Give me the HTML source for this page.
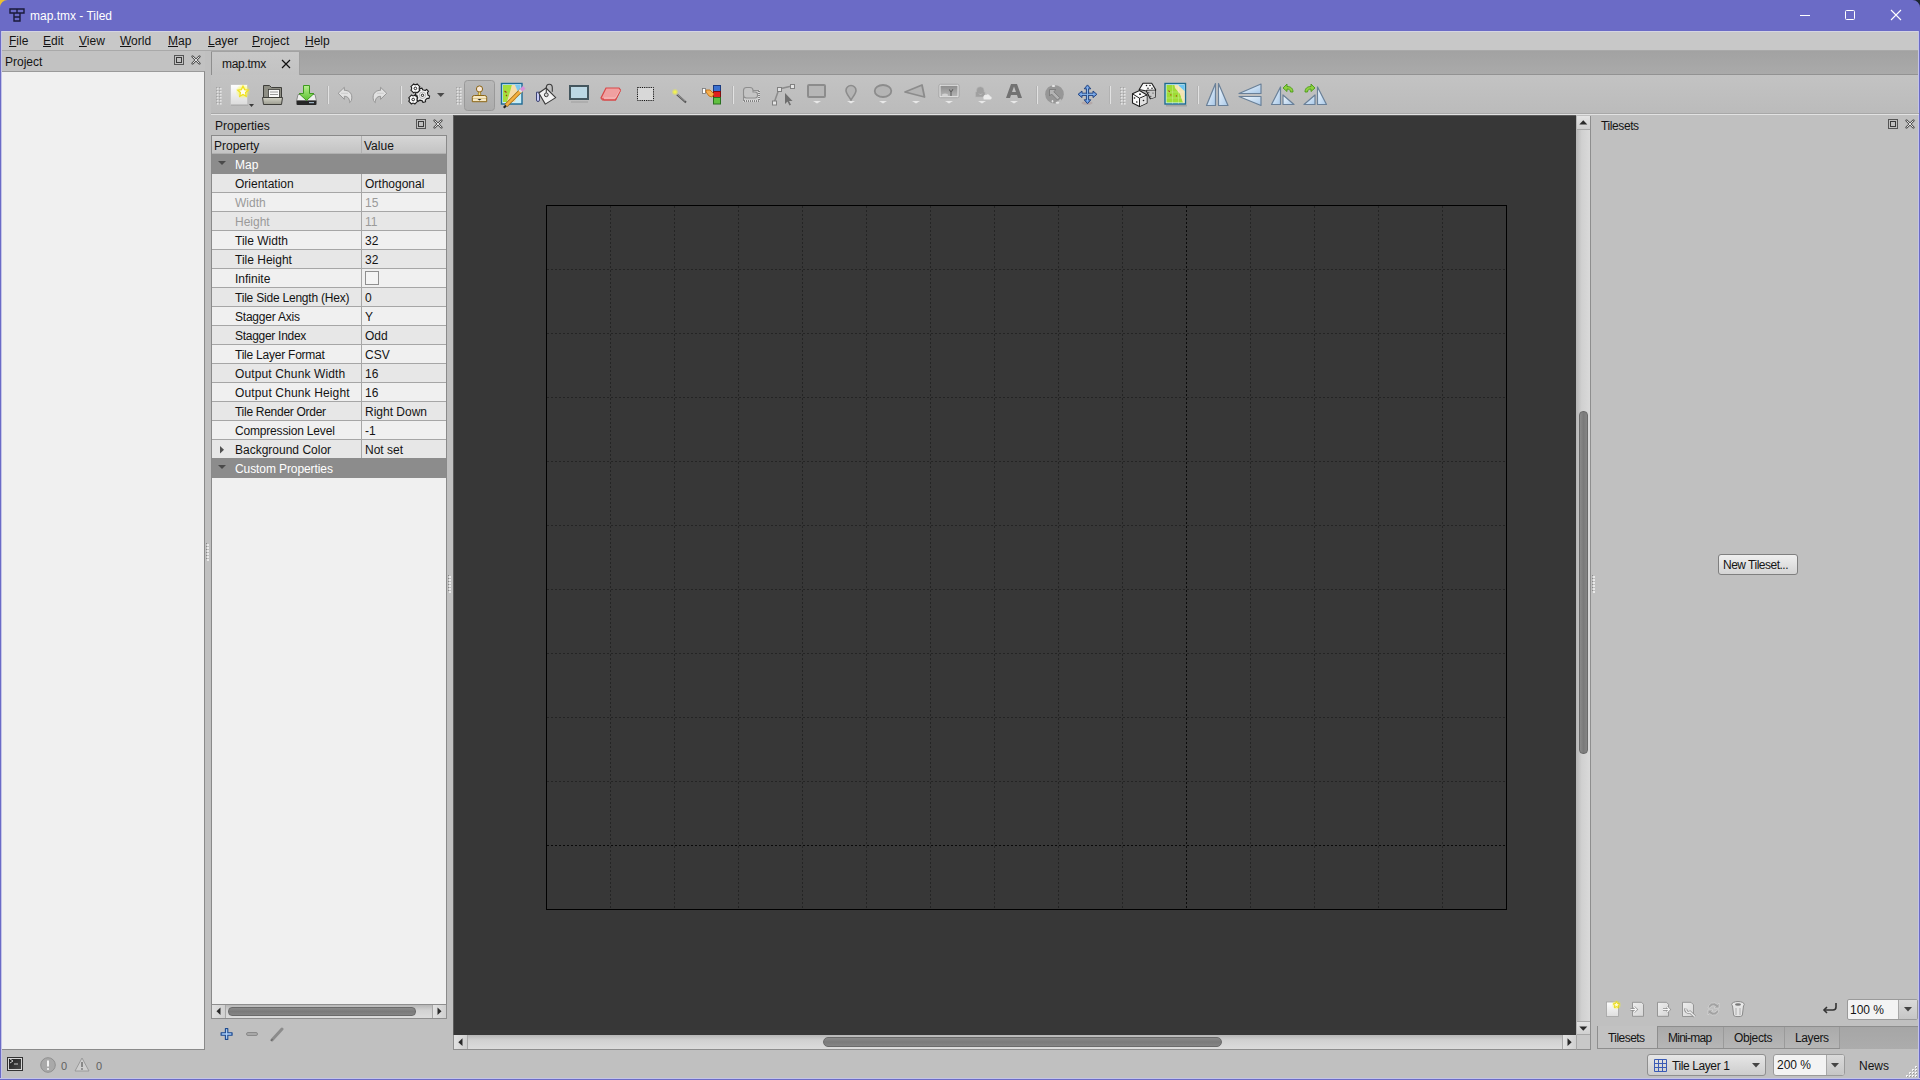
<!DOCTYPE html>
<html><head><meta charset="utf-8">
<style>
*{margin:0;padding:0;box-sizing:border-box}
html,body{width:1920px;height:1080px;overflow:hidden;background:#c0c0c0;font-family:"Liberation Sans",sans-serif;font-size:12px;color:#141414}
.a{position:absolute}
.t{position:absolute;line-height:14px;white-space:nowrap}
#title{left:0;top:0;width:1920px;height:31px;background:#6b6bc6}
#menubar{left:2px;top:31px;width:1916px;height:20px;background:#c8c8c8;border-bottom:1px solid #a9a9a9;border-top:1px solid #d4d4e2}
u{text-decoration:underline;text-underline-offset:1px;text-decoration-thickness:1px}
.dockhdr{background:#c2c2c2}
.fl{position:absolute;width:10px;height:10px;border:1px solid #555}
.fl:after{content:"";position:absolute;box-sizing:border-box;left:1px;top:1px;width:6px;height:6px;border:1px solid #3a3a3a}
.cl{position:absolute;width:11px;height:11px}
#canvas{left:453px;top:115px;width:1123px;height:920px;background:#373737;border-left:1px solid #5c5c5c;border-top:1px solid #5c5c5c}
#map{left:546px;top:205px;width:961px;height:705px;border:1px solid #000}
.vl{position:absolute;width:1px;background:repeating-linear-gradient(to bottom,#242424 0 2px,transparent 2px 4px)}
.hl{position:absolute;height:1px;background:repeating-linear-gradient(to right,#242424 0 2px,transparent 2px 4px)}
.row{position:absolute;left:212px;width:234px;height:19px;border-bottom:1px solid #a6a6a6}
.row .c1{position:absolute;left:0;top:0;width:150px;height:18px;border-right:1px solid #a6a6a6}
.row .k{position:absolute;left:23px;top:3px;line-height:14px;white-space:nowrap}
.row .v{position:absolute;left:153px;top:3px;line-height:14px;white-space:nowrap}
.alt{background:#e7e7e7}
.base{background:#f0f0f0}
.grp{background:#8c8c8c;color:#fff;border-bottom:none}
.grp .k{top:4px}
.dis{color:#9a9a9a}
</style></head><body>
<!-- window frame -->
<div class="a" id="title">
  <svg class="a" style="left:9px;top:8px" width="16" height="14" viewBox="0 0 16 14"><path d="M1 1h14v4H1zM5 5h6M5 5v8h6V5M8 1v4M5 9h6" fill="none" stroke="#1a1a3a" stroke-width="1.4"/></svg>
  <div class="t" style="left:30px;top:9px;color:#fff">map.tmx - Tiled</div>
  <div class="a" style="left:1800px;top:15px;width:10px;height:1px;background:#fff"></div>
  <div class="a" style="left:1845px;top:10px;width:10px;height:10px;border:1px solid #fff;border-radius:1.5px"></div>
  <svg class="a" style="left:1890px;top:9px" width="12" height="12" viewBox="0 0 12 12"><path d="M1 1L11 11M11 1L1 11" stroke="#fff" stroke-width="1.1"/></svg>
</div>
<svg class="a" style="left:0;top:0" width="8" height="8" viewBox="0 0 8 8"><path d="M0 0h7.5A7.5 7.5 0 0 0 0 7.5z" fill="#ecc030"/></svg>
<svg class="a" style="left:1912px;top:0" width="8" height="8" viewBox="0 0 8 8"><path d="M8 0H0.5A7.5 7.5 0 0 1 8 7.5z" fill="#1c2630"/></svg>
<div class="a" style="left:0;top:31px;width:1px;height:1049px;background:#6b6bc6"></div>
<div class="a" style="left:1px;top:31px;width:1px;height:1047px;background:#c4c4e8"></div>
<div class="a" style="left:1919px;top:31px;width:1px;height:1049px;background:#6b6bc6"></div>
<div class="a" style="left:1918px;top:31px;width:1px;height:1047px;background:#c4c4e8"></div>
<svg class="a" style="left:1905px;top:1065px" width="13" height="13" viewBox="0 0 13 13"><g fill="#f4f4f4"><rect x="10" y="1" width="2" height="2"/><rect x="7" y="4" width="2" height="2"/><rect x="10" y="4" width="2" height="2"/><rect x="4" y="7" width="2" height="2"/><rect x="7" y="7" width="2" height="2"/><rect x="10" y="7" width="2" height="2"/><rect x="1" y="10" width="2" height="2"/><rect x="4" y="10" width="2" height="2"/><rect x="7" y="10" width="2" height="2"/><rect x="10" y="10" width="2" height="2"/></g><g fill="#9a9a9a"><rect x="11" y="2" width="1" height="1"/><rect x="8" y="5" width="1" height="1"/><rect x="11" y="5" width="1" height="1"/><rect x="5" y="8" width="1" height="1"/><rect x="8" y="8" width="1" height="1"/><rect x="11" y="8" width="1" height="1"/><rect x="2" y="11" width="1" height="1"/><rect x="5" y="11" width="1" height="1"/><rect x="8" y="11" width="1" height="1"/><rect x="11" y="11" width="1" height="1"/></g></svg>
<div class="a" style="left:0;top:1078px;width:1920px;height:1px;background:#c4c4e8"></div><div class="a" style="left:0;top:1079px;width:1920px;height:1px;background:#6b6bc6"></div>

<div class="a" id="menubar">
  <div class="t" style="left:7px;top:2px"><u>F</u>ile</div>
  <div class="t" style="left:41px;top:2px"><u>E</u>dit</div>
  <div class="t" style="left:77px;top:2px"><u>V</u>iew</div>
  <div class="t" style="left:118px;top:2px"><u>W</u>orld</div>
  <div class="t" style="left:166px;top:2px"><u>M</u>ap</div>
  <div class="t" style="left:206px;top:2px"><u>L</u>ayer</div>
  <div class="t" style="left:250px;top:2px"><u>P</u>roject</div>
  <div class="t" style="left:303px;top:2px"><u>H</u>elp</div>
</div>

<!-- Project dock -->
<div class="a dockhdr" style="left:2px;top:51px;width:203px;height:21px"></div>
<div class="t" style="left:5px;top:55px">Project</div>
<div class="fl" style="left:174px;top:55px"></div>
<svg class="a" style="left:190px;top:54px" width="12" height="12" viewBox="0 0 12 12"><path d="M2.5 2.5L9.5 9.5M9.5 2.5L2.5 9.5" stroke="#4e4e4e" stroke-width="2.4" stroke-linecap="round"/><path d="M2.6 2.6L9.4 9.4M9.4 2.6L2.6 9.4" stroke="#f4f4f4" stroke-width="0.9"/></svg>
<div class="a" style="left:2px;top:71px;width:203px;height:979px;background:#f0f0f0;border-top:1px solid #9a9a9a;border-right:1px solid #8a8a8a;border-bottom:1px solid #8a8a8a"></div>

<!-- tab bar -->
<div class="a" style="left:205px;top:51px;width:1713px;height:24px;background:linear-gradient(#a2a2a2,#aaaaaa);border-bottom:1px solid #929292"></div>
<div class="a" style="left:205px;top:51px;width:6px;height:24px;background:#c0c0c0"></div>
<div class="a" style="left:211px;top:52px;width:89px;height:23px;background:linear-gradient(#c8c8c8,#c2c2c2);border-left:1px solid #8e8e8e;border-right:1px solid #a0a0a0"></div>
<div class="t" style="left:222px;top:57px;letter-spacing:-0.3px">map.tmx</div>
<svg class="a" style="left:281px;top:59px" width="10" height="10" viewBox="0 0 10 10"><path d="M1 1L9 9M9 1L1 9" stroke="#111" stroke-width="1.2"/></svg>

<!-- toolbar area -->
<div class="a" style="left:211px;top:75px;width:1707px;height:38px;background:linear-gradient(#c3c3c3,#bbbbbb)"></div>

<!--TOOLBAR--><svg class="a" style="left:211px;top:74px" width="1708" height="41" viewBox="211 74 1708 41">
<defs>
 <linearGradient id="gpage" x1="0" y1="0" x2="0" y2="1"><stop offset="0" stop-color="#ffffff"/><stop offset="1" stop-color="#dcdcdc"/></linearGradient>
 <radialGradient id="gglow"><stop offset="0" stop-color="#ffff40" stop-opacity="1"/><stop offset="1" stop-color="#ffff00" stop-opacity="0"/></radialGradient>
 <linearGradient id="gfold" x1="0" y1="0" x2="0" y2="1"><stop offset="0" stop-color="#d2d2c6"/><stop offset="1" stop-color="#9c9c90"/></linearGradient>
 <linearGradient id="ggreen" x1="0" y1="0" x2="0" y2="1"><stop offset="0" stop-color="#b8f090"/><stop offset="1" stop-color="#5cc030"/></linearGradient>
 <linearGradient id="gtri" x1="0" y1="0" x2="1" y2="1"><stop offset="0" stop-color="#f4faff"/><stop offset="1" stop-color="#a8c8e8"/></linearGradient>
 <linearGradient id="gsel" x1="0" y1="0" x2="0" y2="1"><stop offset="0" stop-color="#b8b8b8"/><stop offset="1" stop-color="#acacac"/></linearGradient>
 <g id="handle"><rect x="1" y="1" width="1.6" height="1.6" fill="#e6e6e6"/><rect x="0" y="0" width="1.2" height="1.2" fill="#a4a4a4"/><rect x="4" y="1" width="1.6" height="1.6" fill="#e6e6e6"/><rect x="3" y="0" width="1.2" height="1.2" fill="#a4a4a4"/><rect x="1" y="4" width="1.6" height="1.6" fill="#e6e6e6"/><rect x="0" y="3" width="1.2" height="1.2" fill="#a4a4a4"/><rect x="4" y="4" width="1.6" height="1.6" fill="#e6e6e6"/><rect x="3" y="3" width="1.2" height="1.2" fill="#a4a4a4"/><rect x="1" y="7" width="1.6" height="1.6" fill="#e6e6e6"/><rect x="0" y="6" width="1.2" height="1.2" fill="#a4a4a4"/><rect x="4" y="7" width="1.6" height="1.6" fill="#e6e6e6"/><rect x="3" y="6" width="1.2" height="1.2" fill="#a4a4a4"/><rect x="1" y="10" width="1.6" height="1.6" fill="#e6e6e6"/><rect x="0" y="9" width="1.2" height="1.2" fill="#a4a4a4"/><rect x="4" y="10" width="1.6" height="1.6" fill="#e6e6e6"/><rect x="3" y="9" width="1.2" height="1.2" fill="#a4a4a4"/><rect x="1" y="13" width="1.6" height="1.6" fill="#e6e6e6"/><rect x="0" y="12" width="1.2" height="1.2" fill="#a4a4a4"/><rect x="4" y="13" width="1.6" height="1.6" fill="#e6e6e6"/><rect x="3" y="12" width="1.2" height="1.2" fill="#a4a4a4"/><rect x="1" y="16" width="1.6" height="1.6" fill="#e6e6e6"/><rect x="0" y="15" width="1.2" height="1.2" fill="#a4a4a4"/><rect x="4" y="16" width="1.6" height="1.6" fill="#e6e6e6"/><rect x="3" y="15" width="1.2" height="1.2" fill="#a4a4a4"/></g>
 <g id="sep"><rect x="0" y="0" width="1" height="18" fill="#b2b2b2"/><rect x="1" y="0" width="1" height="18" fill="#e2e2e2"/></g>
 <path id="dtri" d="M0 0h8l-4 3z"/>
</defs>
<!-- bottom lines -->
<rect x="211" y="113" width="1708" height="1" fill="#a8a8a8"/>
<rect x="211" y="114" width="1708" height="1" fill="#e2e2e2"/>
<!-- handle 1 -->
<use href="#handle" x="216" y="87"/>
<!-- new -->
<rect x="231" y="104" width="17" height="1.5" fill="#8c8c8c" opacity=".6"/>
<rect x="230.5" y="84.5" width="17" height="20" fill="url(#gpage)" stroke="#c4c4c4" stroke-width=".8"/>
<circle cx="243" cy="91.5" r="7.5" fill="url(#gglow)"/>
<path d="M243 86.3l1.6 3.3 3.6.5-2.6 2.5.6 3.6-3.2-1.7-3.2 1.7.6-3.6-2.6-2.5 3.6-.5z" fill="#fffef0" stroke="#f0e020" stroke-width="1.3"/>
<path d="M249 104h5l-2.5 3z" fill="#3a3a3a"/>
<!-- open -->
<path d="M263.5 85.5h6l2 2h10v10h-18z" fill="#8e8e84" stroke="#3e3e3a"/>
<rect x="268.5" y="89.5" width="11" height="8" fill="#fbfbfb" stroke="#3e3e3a" stroke-width=".8"/>
<path d="M270 92h8M270 94.5h8" stroke="#9a9a9a"/>
<path d="M262.5 97.5h20l-1 7h-18z" fill="url(#gfold)" stroke="#3e3e3a"/>
<!-- save -->
<path d="M298 94.5h17l1.5 6.5h-20z" fill="#eeeeee" stroke="#8a8a8a"/>
<rect x="296.5" y="100.5" width="20" height="4.5" rx="1" fill="#262626"/>
<rect x="309" y="102" width="5" height="1.2" fill="#9ab0c0"/>
<path d="M303.5 85.5h6v8h4.5l-7.5 7-7.5-7h4.5z" fill="url(#ggreen)" stroke="#3f9a20"/>
<!-- sep -->
<use href="#sep" x="327" y="86"/>
<!-- undo -->
<path id="undoP" d="M338.2 93.3L344.3 87.3V90.3C348.5 90.3 351.8 92.8 351.8 97.2C351.8 99.6 351.2 101.6 349.6 102.6C349.6 99 348.3 96.3 344.3 96.3V99.3Z" fill="#e2e2e2" stroke="#8e8e8e" stroke-width=".9" stroke-linejoin="round"/>
<path d="M341 93.3h7" stroke="#c8c8c8" stroke-width=".8"/>
<!-- redo -->
<g transform="matrix(-1 0 0 1 724.9 0)"><path d="M338.2 93.3L344.3 87.3V90.3C348.5 90.3 351.8 92.8 351.8 97.2C351.8 99.6 351.2 101.6 349.6 102.6C349.6 99 348.3 96.3 344.3 96.3V99.3Z" fill="#e2e2e2" stroke="#8e8e8e" stroke-width=".9" stroke-linejoin="round"/><path d="M341 93.3h7" stroke="#c8c8c8" stroke-width=".8"/></g>
<use href="#sep" x="400" y="86"/>
<!-- gears -->
<path d="M428.10 95.30 L429.67 95.90 L428.95 98.50 L427.29 98.20 L425.30 100.15 L425.57 101.81 L422.95 102.49 L422.38 100.90 L419.70 100.15 L418.39 101.21 L416.50 99.28 L417.59 98.00 L416.90 95.30 L415.33 94.70 L416.05 92.10 L417.71 92.40 L419.70 90.45 L419.43 88.79 L422.05 88.11 L422.62 89.70 L425.30 90.45 L426.61 89.39 L428.50 91.32 L427.41 92.60Z" fill="#f0f0f0" stroke="#1e1e1e" stroke-width="1.1" stroke-linejoin="round"/>
<circle cx="422.5" cy="95.3" r="3.2" fill="none" stroke="#a8a8a8" stroke-width=".8"/>
<circle cx="422.5" cy="95.3" r="1.2" fill="none" stroke="#222" stroke-width="1"/>
<path d="M419.19 89.31 L419.89 90.10 L417.03 92.92 L416.25 92.21 L414.49 92.19 L413.70 92.89 L410.88 90.03 L411.59 89.25 L411.61 87.49 L410.91 86.70 L413.77 83.88 L414.55 84.59 L416.31 84.61 L417.10 83.91 L419.92 86.77 L419.21 87.55Z" fill="#fafafa" stroke="#1e1e1e" stroke-width="1.1" stroke-linejoin="round"/>
<circle cx="415.4" cy="88.4" r="1.3" fill="none" stroke="#222" stroke-width="1"/>
<path d="M416.99 100.41 L417.69 101.20 L414.83 104.02 L414.05 103.31 L412.29 103.29 L411.50 103.99 L408.68 101.13 L409.39 100.35 L409.41 98.59 L408.71 97.80 L411.57 94.98 L412.35 95.69 L414.11 95.71 L414.90 95.01 L417.72 97.87 L417.01 98.65Z" fill="#fafafa" stroke="#1e1e1e" stroke-width="1.1" stroke-linejoin="round"/>
<circle cx="413.2" cy="99.5" r="1.3" fill="none" stroke="#222" stroke-width="1"/>
<path d="M437 93h7.5l-3.75 4z" fill="#4a4a4a"/>
<!-- handle 2 -->
<use href="#handle" x="456" y="87"/>
<!-- selected stamp button -->
<rect x="464.5" y="80.5" width="30" height="30" rx="3" fill="url(#gsel)" stroke="#999"/>
<circle cx="479.5" cy="89" r="3.1" fill="#f8e8d8" stroke="#8a6414" stroke-width="1"/>
<rect x="478.3" y="92" width="2.4" height="3.5" rx="1" fill="#f4e070" stroke="#8a6414" stroke-width=".7"/>
<path d="M472.3 101.7v-4.2a2 2 0 0 1 2-2h10.4a2 2 0 0 1 2 2v4.2z" fill="#f6e8c4" stroke="#8a6414" stroke-width="1"/>
<path d="M473 98.5h13" stroke="#dcc890" stroke-width="1"/>
<path d="M477.5 99h4l-2 1.5z" fill="#222"/>
<!-- terrain brush -->
<rect x="501.5" y="83.5" width="20.5" height="20.5" fill="#c8eef8" stroke="#1d6a94" stroke-width="1.4"/>
<path d="M503 85h9l-1 6-4 11h-4z" fill="#a4de3c"/>
<path d="M512 85h3l3 7-3 10h-8z" fill="#f6dca8"/>
<path d="M515 85h5.5v8l-2.5-1z" fill="#7cc8f0"/>
<path d="M504.5 91l2 1.5M506 95l1 1" stroke="#a04010" stroke-width="1.1"/>
<path d="M506 105.5l15.5-15.5" stroke="#9a6810" stroke-width="4"/>
<path d="M506 105.5l15.5-15.5" stroke="#f4b040" stroke-width="2.5"/>
<path d="M519.7 91.8l1.8-1.8" stroke="#e0e0e0" stroke-width="3.6"/>
<path d="M521.2 90.3l3-3" stroke="#d890d8" stroke-width="3.6"/>
<path d="M503.8 107.7l2.2-2.2" stroke="#222" stroke-width="2.2"/>
<!-- bucket -->
<path d="M536.5 92.2h4l-1 1.5v6.3a1.5 1.5 0 0 1-3 0z" fill="#c8ccf8" stroke="#3c4270" stroke-width="1"/>
<path d="M538.8 93l7.2-5 9.7 9.6-10.4 6.5z" fill="#f2f2f2" stroke="#3a3a3a" stroke-width="1.1" stroke-linejoin="round"/>
<path d="M546.3 92.8v-5c0-2.2 1.3-3.5 3-3.5s3 1.3 3 3.5v4" fill="none" stroke="#3a3a3a" stroke-width="1.1"/>
<circle cx="546.3" cy="94.8" r="1.9" fill="#d8d8d8" stroke="#3a3a3a" stroke-width="1"/>
<!-- shape fill rect -->
<rect x="570" y="86" width="18" height="13" fill="#bcd8e4" stroke="#44565e" stroke-width="2"/>
<rect x="571" y="101" width="17" height="2" fill="#a4a4a4" opacity=".6"/>
<!-- eraser -->
<path d="M606 88h13l1.5 2-5 10h-13l-1.5-2z" fill="#f0a0a0" stroke="#d84848" stroke-width="1.2"/>
<path d="M602.5 98l1.5 2h11.5l5-10" fill="none" stroke="#d84848" stroke-width="1.2"/>
<path d="M604 98h11.5l4.5-8" fill="none" stroke="#f8c8c8" stroke-width=".8"/>
<!-- rect select -->
<rect x="637.5" y="87.5" width="16" height="13" fill="#d8d8d8" stroke="#111" stroke-dasharray="1.2 1"/>
<!-- magic wand -->
<circle cx="675" cy="92" r="3.5" fill="url(#gglow)"/>
<path d="M677 94.5l9 8" stroke="#555" stroke-width="2"/>
<path d="M677 94l8 7.2" stroke="#bbb" stroke-width=".7"/>
<!-- select same tile -->
<rect x="713.5" y="85.5" width="7" height="6" fill="#3a70d0" stroke="#1a3a80"/>
<rect x="713.5" y="91.5" width="7" height="6" fill="#e02020" stroke="#801010"/>
<rect x="713.5" y="97.5" width="7" height="6.5" fill="#60c040" stroke="#2a7020"/>
<rect x="702.5" y="88.5" width="3" height="5" fill="#fff" stroke="#777" stroke-width=".8"/>
<path d="M706 90h4l4 4-2 3-3-1-3-4z" fill="#f8b050" stroke="#c07010" stroke-width=".9"/>
<use href="#sep" x="732" y="86"/>
<!-- select objects (disabled) -->
<rect x="743.5" y="90.5" width="15.5" height="10.5" fill="#cdcdcd" stroke="#f4f4f4"/>
<rect x="743.5" y="90.5" width="15.5" height="10.5" fill="none" stroke="#2a2a2a" stroke-dasharray="1 1"/>
<path d="M746.5 87.5h3.5a3 3 0 0 1 3 3v1.5h2a2.5 2.5 0 0 1 2.5 2.5v1a2.5 2.5 0 0 1-2.5 2.5h-8.5a3 3 0 0 1-3-3v-4.5a3 3 0 0 1 3-3z" fill="#c4c4c4" stroke="#8e8e8e" stroke-width="1.1"/>
<!-- edit polygons -->
<path d="M774 103l5-14 13-3" fill="none" stroke="#8c8c8c" stroke-width="1.5"/>
<rect x="772.5" y="101" width="4" height="4" fill="#e4e4e4" stroke="#808080"/>
<rect x="777.5" y="87.5" width="4" height="4" fill="#e4e4e4" stroke="#808080"/>
<rect x="790.5" y="84.5" width="4" height="4" fill="#e4e4e4" stroke="#808080"/>
<path d="M785 93v11l2.5-2.5 2 4 1.5-.8-2-3.8h3.5z" fill="#6e6e6e"/>
<!-- rect obj -->
<rect x="808" y="85" width="17" height="12" fill="#b6b6b6" stroke="#8c8c8c" stroke-width="2" rx="1"/>
<path d="M813 101h8l-4 2.5z" fill="#e8e8e8"/>
<!-- point -->
<path d="M851 85.5a5 5 0 0 1 5 5c0 3-3 6-5 9.5-2-3.5-5-6.5-5-9.5a5 5 0 0 1 5-5z" fill="#b4b4b4" stroke="#8c8c8c" stroke-width="1.6"/>
<path d="M847 101h8l-4 2.5z" fill="#e8e8e8"/>
<!-- ellipse -->
<ellipse cx="883" cy="91" rx="8.3" ry="6" fill="#b4b4b4" stroke="#8c8c8c" stroke-width="1.8"/>
<path d="M879 101h8l-4 2.5z" fill="#e8e8e8"/>
<!-- polygon -->
<path d="M905 92l17-7 2.5 12z" fill="#b4b4b4" stroke="#8c8c8c" stroke-width="1.8" stroke-linejoin="round"/>
<path d="M912 101h8l-4 2.5z" fill="#e8e8e8"/>
<!-- image -->
<defs><linearGradient id="gimg" x1="0" y1="0" x2="0" y2="1"><stop offset="0" stop-color="#8e8e8e"/><stop offset="1" stop-color="#b4b4b4"/></linearGradient></defs>
<rect x="939" y="84.3" width="20" height="13.4" rx="1.5" fill="#e6e6e6" stroke="#9a9a9a" stroke-width=".8"/>
<rect x="940.5" y="85.8" width="17" height="10.4" fill="url(#gimg)"/>
<ellipse cx="945" cy="95" rx="3" ry="1.6" fill="#d2d2d2"/>
<path d="M951 96v-4M951 92l-1.8-2.5M951 92l2-2.8" stroke="#5e5e5e" stroke-width="1.1" fill="none"/>
<path d="M945 101h8l-4 2.5z" fill="#e8e8e8"/>
<!-- template -->
<path d="M976.5 90.5a3.8 3.8 0 0 1 7.6 0v1.5h1v5h-9.6v-5h1z" fill="#a0a0a0" stroke="#b8b8b8" stroke-width=".6"/>
<path d="M979 93.5l1.5 1.5 1.5-1.5" stroke="#c4c4c4" stroke-width=".8" fill="none"/>
<path d="M983.5 98.2a2.3 2.3 0 0 1 2.8-3.2 2.2 2.2 0 0 1 3.7 1.2 1.6 1.6 0 0 1 .2 3.2h-6.5z" fill="#ececec"/>
<path d="M978 101h8l-4 2.5z" fill="#e8e8e8"/>
<!-- text A -->
<path d="M1006 98l5-14h6l5 14h-4l-1-3h-6l-1 3zM1012 92h4l-2-5.5z" fill="#727272" fill-rule="evenodd"/>
<path d="M1010 101h8l-4 2.5z" fill="#e8e8e8"/>
<use href="#sep" x="1036" y="86"/>
<!-- world tool -->
<circle cx="1054.5" cy="94.2" r="9.3" fill="#979797"/>
<path d="M1061 99.5a9.3 9.3 0 0 1-5 3.8" stroke="#bdbdbd" stroke-width="2.2" fill="none"/>
<path d="M1049.5 89.5h6.5l-2.2 2.2 6 6-2.3 2.3-6-6-2 2z" fill="#b4b4b4" stroke="#7a7a7a" stroke-width=".9" stroke-linejoin="round"/>
<ellipse cx="1053.5" cy="86" rx="1.8" ry="1" fill="#e6e6e6"/>
<ellipse cx="1052.5" cy="101.2" rx=".8" ry="1.2" fill="#e6e6e6"/>
<ellipse cx="1057.5" cy="102.8" rx="1.8" ry="1" fill="#e6e6e6"/>
<!-- move -->
<ellipse cx="1087" cy="103" rx="5.5" ry="1.8" fill="#a08080" opacity=".35"/>
<path d="M1088.60 93.20 L1088.60 88.80 L1090.80 88.80 L1087.50 84.90 L1084.20 88.80 L1086.40 88.80 L1086.40 93.20 L1088.60 95.40 L1093.00 95.40 L1093.00 97.60 L1096.90 94.30 L1093.00 91.00 L1093.00 93.20 L1088.60 93.20 L1086.40 95.40 L1086.40 99.80 L1084.20 99.80 L1087.50 103.70 L1090.80 99.80 L1088.60 99.80 L1088.60 95.40 L1086.40 93.20 L1082.00 93.20 L1082.00 91.00 L1078.10 94.30 L1082.00 97.60 L1082.00 95.40 L1086.40 95.40Z" fill="#6a9ae0" stroke="#173a78" stroke-width=".9" stroke-linejoin="miter"/>
<path d="M1087.5 87.39999999999999V101.2M1080.6 94.3H1094.4" stroke="#9cc8f4" stroke-width=".7"/>
<use href="#sep" x="1109" y="86"/>
<use href="#handle" x="1120" y="87"/>
<!-- dice -->
<path d="M1139.2 89.5L1143 83.3h8.7l3.9 6.3-.5 7.6-4.9 1.4-3.8-7.6z" fill="#fafafa" stroke="#1e1e1e" stroke-width="1.1" stroke-linejoin="round"/>
<path d="M1146.5 90.2h9.1M1146.5 90.2l4.4 8.2" fill="none" stroke="#1e1e1e" stroke-width="1"/>
<path d="M1147 91l8.3-.3-.4 6.5-4 1.2z" fill="#c8c8c8"/>
<circle cx="1146.5" cy="85.5" r=".75" fill="#111"/><circle cx="1150" cy="85.5" r=".75" fill="#111"/><circle cx="1148" cy="88.2" r=".75" fill="#111"/><circle cx="1152" cy="88.2" r=".75" fill="#111"/>
<circle cx="1148.8" cy="92.6" r=".6" fill="#333"/><circle cx="1153" cy="93" r=".6" fill="#333"/><circle cx="1150.8" cy="96.3" r=".6" fill="#333"/>
<path d="M1132.5 93.8l7-3.3 7.5 4.5v8l-7.5 3.5-7-3.5z" fill="#fafafa" stroke="#1e1e1e" stroke-width="1.1" stroke-linejoin="round"/>
<path d="M1132.5 93.8l7 4.4 7.5-3.2M1139.5 98.2v8.3" fill="none" stroke="#1e1e1e" stroke-width="1"/>
<path d="M1140 99l6.5-3v7l-6.5 3z" fill="#e2e2e2"/>
<circle cx="1140" cy="94.2" r=".9" fill="#111"/><circle cx="1134.5" cy="98" r=".8" fill="#111"/><circle cx="1136.8" cy="102" r=".8" fill="#111"/><circle cx="1143.5" cy="100.5" r=".8" fill="#222"/>
<!-- wang map -->
<rect x="1165" y="83.5" width="20.5" height="20.5" fill="#c8f0fa" stroke="#1e6a8e" stroke-width="1.4"/>
<path d="M1166.5 85h8l5 6 3 9 1.5 2.5h-17.5z" fill="#9edc34"/>
<path d="M1174.5 85h3.5l6.5 6v11.5l-1.5.5-3-9-5-6z" fill="#f4e4b0"/>
<path d="M1178 85h6.5v6z" fill="#6cc4f0"/>
<path d="M1166.5 92h18M1166.5 98h18M1172.5 85v19M1178.5 85v19" stroke="#ffffff" stroke-width=".5" opacity=".45"/>
<path d="M1168.5 90.5l1.2 1.5M1170.5 94.5l.8.8M1176 95.5l.8.8" stroke="#b04010" stroke-width="1.1"/>
<rect x="1166" y="105" width="21" height="1.5" fill="#8a8a8a" opacity=".5"/>
<use href="#sep" x="1197" y="86"/>
<!-- flip h -->
<path d="M1215.5 83.5v22h-9z" fill="url(#gtri)" stroke="#6a8098" stroke-width="1.2" stroke-linejoin="round"/>
<path d="M1218.5 83.5v22h9.5z" fill="url(#gtri)" stroke="#6a8098" stroke-width="1.2" stroke-linejoin="round"/>
<!-- flip v -->
<path d="M1261 84v9.5h-22z" fill="url(#gtri)" stroke="#6a8098" stroke-width="1.2" stroke-linejoin="round"/>
<path d="M1261 105.5v-9h-22z" fill="url(#gtri)" stroke="#6a8098" stroke-width="1.2" stroke-linejoin="round"/>
<!-- rotate left -->
<path d="M1280.5 87v17.5h-9z" fill="url(#gtri)" stroke="#6a8098" stroke-width="1.2" stroke-linejoin="round"/>
<path d="M1283 95v9.5h11z" fill="url(#gtri)" stroke="#6a8098" stroke-width="1.2" stroke-linejoin="round"/>
<path d="M1283 88l4-4v2.5c4 0 6 2 6 5.5h-2.5c0-2-1.5-3-3.5-3v2.5z" fill="#8ed040" stroke="#4a9a18" stroke-width=".9"/>
<!-- rotate right -->
<path d="M1317.5 87v17.5h9z" fill="url(#gtri)" stroke="#6a8098" stroke-width="1.2" stroke-linejoin="round"/>
<path d="M1315 95v9.5h-11z" fill="url(#gtri)" stroke="#6a8098" stroke-width="1.2" stroke-linejoin="round"/>
<path d="M1315 88l-4-4v2.5c-4 0-6 2-6 5.5h2.5c0-2 1.5-3 3.5-3v2.5z" fill="#8ed040" stroke="#4a9a18" stroke-width=".9"/>
</svg>
<!--/TOOLBAR-->
<!-- Properties dock -->
<div class="t" style="left:215px;top:119px">Properties</div>
<div class="fl" style="left:416px;top:119px"></div>
<svg class="a" style="left:432px;top:118px" width="12" height="12" viewBox="0 0 12 12"><path d="M2.5 2.5L9.5 9.5M9.5 2.5L2.5 9.5" stroke="#4e4e4e" stroke-width="2.4" stroke-linecap="round"/><path d="M2.6 2.6L9.4 9.4M9.4 2.6L2.6 9.4" stroke="#f4f4f4" stroke-width="0.9"/></svg>
<div class="a" style="left:211px;top:135px;width:236px;height:884px;background:#f0f0f0;border:1px solid #8a8a8a"></div>
<div class="a" style="left:212px;top:136px;width:234px;height:18px;background:linear-gradient(#d6d6d6,#c3c3c3);border-bottom:1px solid #b0b0b0"></div>
<div class="a" style="left:361px;top:136px;width:1px;height:18px;background:#b0b0b0"></div>
<div class="t" style="left:214px;top:139px">Property</div>
<div class="t" style="left:364px;top:139px">Value</div>

<div id="rows">
<div class="row grp" style="top:154px;height:20px"><svg class="a" style="left:6px;top:7px" width="8" height="5" viewBox="0 0 8 5"><path d="M0 0h8L4 4z" fill="#4a4a4a"/></svg><div class="k" style="color:#fff">Map</div></div>
<div class="row alt" style="top:174px"><div class="c1"></div><div class="k">Orientation</div><div class="v">Orthogonal</div></div>
<div class="row base" style="top:193px"><div class="c1"></div><div class="k dis">Width</div><div class="v dis">15</div></div>
<div class="row alt" style="top:212px"><div class="c1"></div><div class="k dis">Height</div><div class="v dis">11</div></div>
<div class="row base" style="top:231px"><div class="c1"></div><div class="k">Tile Width</div><div class="v">32</div></div>
<div class="row alt" style="top:250px"><div class="c1"></div><div class="k">Tile Height</div><div class="v">32</div></div>
<div class="row base" style="top:269px"><div class="c1"></div><div class="k">Infinite</div><div class="a" style="left:153px;top:2px;width:14px;height:14px;border:1px solid #8f8f8f;background:#f4f4f4"></div></div>
<div class="row alt" style="top:288px"><div class="c1"></div><div class="k" style="letter-spacing:-0.21px">Tile Side Length (Hex)</div><div class="v">0</div></div>
<div class="row base" style="top:307px"><div class="c1"></div><div class="k" style="letter-spacing:-0.22px">Stagger Axis</div><div class="v">Y</div></div>
<div class="row alt" style="top:326px"><div class="c1"></div><div class="k" style="letter-spacing:-0.28px">Stagger Index</div><div class="v">Odd</div></div>
<div class="row base" style="top:345px"><div class="c1"></div><div class="k" style="letter-spacing:-0.23px">Tile Layer Format</div><div class="v">CSV</div></div>
<div class="row alt" style="top:364px"><div class="c1"></div><div class="k" style="letter-spacing:0.13px">Output Chunk Width</div><div class="v">16</div></div>
<div class="row base" style="top:383px"><div class="c1"></div><div class="k" style="letter-spacing:0.14px">Output Chunk Height</div><div class="v">16</div></div>
<div class="row alt" style="top:402px"><div class="c1"></div><div class="k" style="letter-spacing:-0.28px">Tile Render Order</div><div class="v">Right Down</div></div>
<div class="row base" style="top:421px"><div class="c1"></div><div class="k" style="letter-spacing:-0.18px">Compression Level</div><div class="v">-1</div></div>
<div class="row alt" style="top:440px"><div class="c1"></div><div class="k">Background Color</div><div class="v">Not set</div><svg class="a" style="left:8px;top:6px" width="5" height="8" viewBox="0 0 5 8"><path d="M0 0v7.5L4 3.75z" fill="#505050"/></svg></div>
<div class="row grp" style="top:458px;height:20px"><svg class="a" style="left:6px;top:7px" width="8" height="5" viewBox="0 0 8 5"><path d="M0 0h8L4 4z" fill="#4a4a4a"/></svg><div class="k" style="color:#fff;letter-spacing:-0.09px">Custom Properties</div></div>
</div><!--/rows-->

<!-- Canvas -->
<div class="a" id="canvas"></div>
<div class="a" id="map"></div>
<div id="grid">
<div class="vl" style="left:610px;top:206px;height:703px"></div>
<div class="vl" style="left:674px;top:206px;height:703px"></div>
<div class="vl" style="left:738px;top:206px;height:703px"></div>
<div class="vl" style="left:802px;top:206px;height:703px"></div>
<div class="vl" style="left:866px;top:206px;height:703px"></div>
<div class="vl" style="left:930px;top:206px;height:703px"></div>
<div class="vl" style="left:994px;top:206px;height:703px"></div>
<div class="vl" style="left:1058px;top:206px;height:703px"></div>
<div class="vl" style="left:1122px;top:206px;height:703px"></div>
<div class="vl" style="left:1186px;top:206px;height:703px;background:repeating-linear-gradient(to bottom,#0a0a0a 0 2px,transparent 2px 4px)"></div>
<div class="vl" style="left:1250px;top:206px;height:703px"></div>
<div class="vl" style="left:1314px;top:206px;height:703px"></div>
<div class="vl" style="left:1378px;top:206px;height:703px"></div>
<div class="vl" style="left:1442px;top:206px;height:703px"></div>
<div class="hl" style="left:547px;top:269px;width:959px"></div>
<div class="hl" style="left:547px;top:333px;width:959px"></div>
<div class="hl" style="left:547px;top:397px;width:959px"></div>
<div class="hl" style="left:547px;top:461px;width:959px"></div>
<div class="hl" style="left:547px;top:525px;width:959px"></div>
<div class="hl" style="left:547px;top:589px;width:959px"></div>
<div class="hl" style="left:547px;top:653px;width:959px"></div>
<div class="hl" style="left:547px;top:717px;width:959px"></div>
<div class="hl" style="left:547px;top:781px;width:959px"></div>
<div class="hl" style="left:547px;top:845px;width:959px;background:repeating-linear-gradient(to right,#0a0a0a 0 2px,transparent 2px 4px)"></div>
</div>

<!-- canvas scrollbars -->
<div class="a" style="left:1576px;top:116px;width:15px;height:934px;background:linear-gradient(to right,#b4b4b4,#d0d0d0 40%,#dadada);border-right:1px solid #8e8e8e"></div>
<div class="a" style="left:1577px;top:116px;width:13px;height:14px;background:linear-gradient(#e4e4e4,#cfcfcf);border-bottom:1px solid #a8a8a8"></div>
<svg class="a" style="left:1579px;top:120px" width="9" height="5" viewBox="0 0 9 5"><path d="M0.3 4.5h8L4.3 0.3z" fill="#2a2a2a"/></svg>
<div class="a" style="left:1579px;top:411px;width:9px;height:343px;border-radius:4px;background:linear-gradient(to right,#8a8a8a,#7a7a7a 50%,#858585);border:1px solid #6a6a6a"></div>
<div class="a" style="left:1577px;top:1021px;width:13px;height:14px;background:linear-gradient(#e2e2e2,#d0d0d0);border-top:1px solid #a8a8a8;border-bottom:1px solid #a8a8a8"></div>
<svg class="a" style="left:1579px;top:1026px" width="9" height="5" viewBox="0 0 9 5"><path d="M0.3 0.5h8L4.3 4.7z" fill="#2a2a2a"/></svg>
<div class="a" style="left:1576px;top:1035px;width:15px;height:15px;background:#c8c8c8;border-right:1px solid #8e8e8e;border-bottom:1px solid #8e8e8e;border-left:1px solid #a8a8a8"></div>

<div class="a" style="left:453px;top:1035px;width:1123px;height:15px;background:linear-gradient(#b6b6b6,#d2d2d2 40%,#dcdcdc);border-bottom:1px solid #8e8e8e;border-left:1px solid #8e8e8e"></div>
<div class="a" style="left:454px;top:1035px;width:14px;height:14px;background:linear-gradient(to right,#e2e2e2,#d0d0d0);border-right:1px solid #a8a8a8"></div>
<svg class="a" style="left:458px;top:1038px" width="5" height="9" viewBox="0 0 5 9"><path d="M4.5 0.3v7.8L0.3 4.2z" fill="#2a2a2a"/></svg>
<div class="a" style="left:823px;top:1037px;width:399px;height:10px;border-radius:5px;background:linear-gradient(#8a8a8a,#7a7a7a 50%,#858585);border:1px solid #6a6a6a"></div>
<div class="a" style="left:1562px;top:1035px;width:14px;height:14px;background:linear-gradient(to right,#e2e2e2,#d0d0d0);border-left:1px solid #a8a8a8"></div>
<svg class="a" style="left:1567px;top:1038px" width="5" height="9" viewBox="0 0 5 9"><path d="M0.5 0.3v7.8L4.7 4.2z" fill="#2a2a2a"/></svg>

<!-- properties bottom scrollbar & buttons -->
<div class="a" style="left:211px;top:1004px;width:236px;height:15px;background:linear-gradient(#b6b6b6,#d2d2d2 40%,#dcdcdc);border:1px solid #8e8e8e"></div>
<div class="a" style="left:212px;top:1005px;width:14px;height:13px;background:linear-gradient(to right,#e2e2e2,#d0d0d0);border-right:1px solid #a8a8a8"></div>
<svg class="a" style="left:216px;top:1007px" width="5" height="9" viewBox="0 0 5 9"><path d="M4.5 0.5v7.5L0.5 4.25z" fill="#2a2a2a"/></svg>
<div class="a" style="left:228px;top:1007px;width:188px;height:9px;border-radius:4px;background:linear-gradient(#8a8a8a,#7a7a7a 50%,#858585);border:1px solid #6a6a6a"></div>
<div class="a" style="left:432px;top:1005px;width:14px;height:13px;background:linear-gradient(to right,#e2e2e2,#d0d0d0);border-left:1px solid #a8a8a8"></div>
<svg class="a" style="left:437px;top:1007px" width="5" height="9" viewBox="0 0 5 9"><path d="M0.5 0.5v7.5L4.5 4.25z" fill="#2a2a2a"/></svg>

<svg class="a" style="left:220px;top:1027px" width="14" height="14" viewBox="0 0 14 14"><path d="M5.4 1.5h2.4v4.3h4.3v2.4H7.8v4.3H5.4V8.2H1.1V5.8h4.3z" fill="#7aa8e4" stroke="#1e4a8e" stroke-width="1.1" stroke-linejoin="round"/><path d="M6.6 2.5v9M2.2 7h8.8" stroke="#bcd8f6" stroke-width=".8"/></svg>
<div class="a" style="left:246px;top:1032px;width:12px;height:4px;border-radius:2px;background:#a8a8a8;border:1px solid #8a8a8a"></div>
<svg class="a" style="left:270px;top:1027px" width="14" height="15" viewBox="0 0 14 15"><path d="M2 13L12 2" stroke="#8c8c8c" stroke-width="3" stroke-linecap="round"/><path d="M1 14l1.5-2" stroke="#6a6a6a" stroke-width="1.2"/></svg>

<!-- splitter handles -->
<svg class="a" style="left:206px;top:543px" width="4" height="19" viewBox="0 0 4 19"><rect x="1" y="1" width="2" height="2" fill="#e8e8e8"/><rect x="0" y="0" width="1" height="1" fill="#8a8a8a"/><rect x="1" y="4" width="2" height="2" fill="#e8e8e8"/><rect x="0" y="3" width="1" height="1" fill="#8a8a8a"/><rect x="1" y="7" width="2" height="2" fill="#e8e8e8"/><rect x="0" y="6" width="1" height="1" fill="#8a8a8a"/><rect x="1" y="10" width="2" height="2" fill="#e8e8e8"/><rect x="0" y="9" width="1" height="1" fill="#8a8a8a"/><rect x="1" y="13" width="2" height="2" fill="#e8e8e8"/><rect x="0" y="12" width="1" height="1" fill="#8a8a8a"/><rect x="1" y="16" width="2" height="2" fill="#e8e8e8"/><rect x="0" y="15" width="1" height="1" fill="#8a8a8a"/></svg><svg class="a" style="left:448px;top:575px" width="4" height="19" viewBox="0 0 4 19"><rect x="1" y="1" width="2" height="2" fill="#e8e8e8"/><rect x="0" y="0" width="1" height="1" fill="#8a8a8a"/><rect x="1" y="4" width="2" height="2" fill="#e8e8e8"/><rect x="0" y="3" width="1" height="1" fill="#8a8a8a"/><rect x="1" y="7" width="2" height="2" fill="#e8e8e8"/><rect x="0" y="6" width="1" height="1" fill="#8a8a8a"/><rect x="1" y="10" width="2" height="2" fill="#e8e8e8"/><rect x="0" y="9" width="1" height="1" fill="#8a8a8a"/><rect x="1" y="13" width="2" height="2" fill="#e8e8e8"/><rect x="0" y="12" width="1" height="1" fill="#8a8a8a"/><rect x="1" y="16" width="2" height="2" fill="#e8e8e8"/><rect x="0" y="15" width="1" height="1" fill="#8a8a8a"/></svg><svg class="a" style="left:1592px;top:575px" width="4" height="19" viewBox="0 0 4 19"><rect x="1" y="1" width="2" height="2" fill="#e8e8e8"/><rect x="0" y="0" width="1" height="1" fill="#8a8a8a"/><rect x="1" y="4" width="2" height="2" fill="#e8e8e8"/><rect x="0" y="3" width="1" height="1" fill="#8a8a8a"/><rect x="1" y="7" width="2" height="2" fill="#e8e8e8"/><rect x="0" y="6" width="1" height="1" fill="#8a8a8a"/><rect x="1" y="10" width="2" height="2" fill="#e8e8e8"/><rect x="0" y="9" width="1" height="1" fill="#8a8a8a"/><rect x="1" y="13" width="2" height="2" fill="#e8e8e8"/><rect x="0" y="12" width="1" height="1" fill="#8a8a8a"/><rect x="1" y="16" width="2" height="2" fill="#e8e8e8"/><rect x="0" y="15" width="1" height="1" fill="#8a8a8a"/></svg>
<!-- Tilesets dock -->
<div class="t" style="left:1601px;top:119px;letter-spacing:-0.4px">Tilesets</div>
<div class="fl" style="left:1888px;top:119px"></div>
<svg class="a" style="left:1904px;top:118px" width="12" height="12" viewBox="0 0 12 12"><path d="M2.5 2.5L9.5 9.5M9.5 2.5L2.5 9.5" stroke="#4e4e4e" stroke-width="2.4" stroke-linecap="round"/><path d="M2.6 2.6L9.4 9.4M9.4 2.6L2.6 9.4" stroke="#f4f4f4" stroke-width="0.9"/></svg>
<div class="a" style="left:1718px;top:554px;width:80px;height:21px;border-radius:3px;border:1px solid #7f7f7f;background:linear-gradient(#efefef,#d4d4d4)"></div>
<div class="t" style="left:1723px;top:558px;letter-spacing:-0.5px">New Tileset...</div>

<!-- tileset toolbar -->
<div id="tstb"><svg class="a" style="left:1600px;top:996px" width="150" height="26" viewBox="1600 996 150 26">
<defs>
 <linearGradient id="gpg2" x1="0" y1="0" x2="0" y2="1"><stop offset="0" stop-color="#fdfdfd"/><stop offset="1" stop-color="#dedede"/></linearGradient>
 <linearGradient id="gpg3" x1="0" y1="0" x2="1" y2="1"><stop offset="0" stop-color="#eeeeee"/><stop offset="1" stop-color="#d6d6d6"/></linearGradient>
 <radialGradient id="gglow2"><stop offset="0" stop-color="#ffff30" stop-opacity="1"/><stop offset="1" stop-color="#ffff00" stop-opacity="0"/></radialGradient>
</defs>
<rect x="1606.5" y="1002" width="12" height="14.5" fill="url(#gpg2)" stroke="#a4a4a4" stroke-width=".8"/>
<circle cx="1616.5" cy="1004.8" r="5" fill="url(#gglow2)"/>
<path d="M1616.5 1001.6l1 2 2.2.3-1.6 1.5.4 2.2-2-1-2 1 .4-2.2-1.6-1.5 2.2-.3z" fill="#fffbd0" stroke="#e8d400" stroke-width=".9"/>
<path d="M1632.5 1002.3h9l2 2v12h-11z" fill="url(#gpg3)" stroke="#8e8e8e" stroke-width=".9"/>
<path d="M1630.5 1009.5h5.5M1634 1007l2.5 2.5-2.5 2.5" fill="none" stroke="#8e8e8e" stroke-width="2.4"/>
<path d="M1630.5 1009.5h5.5M1634 1007l2.5 2.5-2.5 2.5" fill="none" stroke="#f6f6f6" stroke-width="1.1"/>
<path d="M1657.5 1002.3h9l2 2v12h-11z" fill="url(#gpg3)" stroke="#8e8e8e" stroke-width=".9"/>
<path d="M1663 1009.5h6M1667 1007l2.5 2.5-2.5 2.5" fill="none" stroke="#8e8e8e" stroke-width="2.4"/>
<path d="M1663 1009.5h6M1667 1007l2.5 2.5-2.5 2.5" fill="none" stroke="#f6f6f6" stroke-width="1.1"/>
<path d="M1682.5 1002.3h8.5l2.5 2.5v11.7h-11z" fill="url(#gpg3)" stroke="#8e8e8e" stroke-width=".9"/>
<path d="M1686 1008.5a2.8 2.8 0 0 0 4 3.5l4.8 4.5" fill="none" stroke="#8e8e8e" stroke-width="3"/>
<path d="M1686 1008.5a2.8 2.8 0 0 0 4 3.5l4.8 4.5" fill="none" stroke="#ececec" stroke-width="1.5"/>
<path d="M1708 1008a5.5 5.5 0 0 1 9.5-3.5l1.5-1.5v5h-5l1.5-1.5a3.5 3.5 0 0 0-5.5 1.5z" fill="#a2a2a2" stroke="#d8d8d8" stroke-width=".7"/>
<path d="M1719 1010a5.5 5.5 0 0 1-9.5 3.5l-1.5 1.5v-5h5l-1.5 1.5a3.5 3.5 0 0 0 5.5-1.5z" fill="#a2a2a2" stroke="#d8d8d8" stroke-width=".7"/>
<ellipse cx="1738" cy="1004.5" rx="6.3" ry="3" fill="#e8e8e8" stroke="#8a8a8a" stroke-width="1"/>
<ellipse cx="1738" cy="1004.5" rx="3" ry="1.2" fill="#7a7a7a"/>
<path d="M1732.5 1006l1.2 9.5a4.5 1.6 0 0 0 8.6 0l1.2-9.5" fill="#e4e4e4" stroke="#8a8a8a" stroke-width="1"/>
<path d="M1736 1008v7M1740 1008v7" stroke="#a0a0a0" stroke-width=".8"/>
</svg>
</div>
<div class="a" style="left:1847px;top:999px;width:71px;height:21px;border-radius:2px;border:1px solid #9a9a9a;background:#f3f3f3"></div>
<div class="a" style="left:1898px;top:1000px;width:19px;height:19px;background:linear-gradient(#dadada,#c6c6c6);border-left:1px solid #a8a8a8"></div>
<svg class="a" style="left:1904px;top:1007px" width="8" height="5" viewBox="0 0 8 5"><path d="M0 0h8L4 4.5z" fill="#444"/></svg>
<div class="t" style="left:1850px;top:1003px">100 %</div>
<svg class="a" style="left:1822px;top:1002px" width="16" height="12" viewBox="0 0 16 12"><path d="M14 1v4a3 3 0 0 1-3 3H3" fill="none" stroke="#333" stroke-width="1.6"/><path d="M5 5L2 8l3 3" fill="none" stroke="#333" stroke-width="1.6"/></svg>

<!-- bottom tabs -->
<div class="a" style="left:1657px;top:1026px;width:261px;height:23px;background:linear-gradient(#a6a6a6,#acacac);border-top:1px solid #8e8e8e"></div>
<div class="a" style="left:1657px;top:1026px;width:183px;height:23px;background:linear-gradient(#aaaaaa,#b6b6b6);border-top:1px solid #8e8e8e;border-bottom:1px solid #8e8e8e"></div>
<div class="a" style="left:1597px;top:1026px;width:61px;height:23px;background:#c2c2c2;border-left:1px solid #8e8e8e;border-right:1px solid #8e8e8e;border-bottom:1px solid #8e8e8e"></div>
<div class="a" style="left:1723px;top:1027px;width:1px;height:21px;background:#9a9a9a"></div>
<div class="a" style="left:1784px;top:1027px;width:1px;height:21px;background:#9a9a9a"></div>
<div class="a" style="left:1839px;top:1027px;width:1px;height:21px;background:#9a9a9a"></div>
<div class="t" style="left:1608px;top:1031px;letter-spacing:-0.55px">Tilesets</div>
<div class="t" style="left:1668px;top:1031px;letter-spacing:-0.75px">Mini-map</div>
<div class="t" style="left:1734px;top:1031px;letter-spacing:-0.35px">Objects</div>
<div class="t" style="left:1795px;top:1031px;letter-spacing:-0.4px">Layers</div>

<!-- status bar -->
<div class="a" style="left:7px;top:1057px;width:16px;height:14px;background:linear-gradient(135deg,#1e1e1e,#4a4a4a);border:1px solid #333;box-shadow:inset 0 0 0 1px #d8d8d8"></div>
<svg class="a" style="left:9px;top:1058px" width="10" height="8" viewBox="0 0 10 8"><path d="M1 1l3 2-3 2M5 6h4" fill="none" stroke="#ddd" stroke-width="0.9"/></svg>
<svg class="a" style="left:40px;top:1057px" width="16" height="16" viewBox="0 0 16 16"><circle cx="8" cy="8" r="7.3" fill="#a9a9a9" stroke="#8f8f8f"/><path d="M8 3.5v6" stroke="#f4f4f4" stroke-width="2"/><circle cx="8" cy="12" r="1.1" fill="#f4f4f4"/></svg>
<div class="t" style="left:61px;top:1059px;color:#606060;font-size:11px">0</div>
<svg class="a" style="left:74px;top:1057px" width="16" height="15" viewBox="0 0 16 15"><path d="M8 1L15 14H1z" fill="#cfcfcf" stroke="#9a9a9a"/><path d="M8 5v5" stroke="#777" stroke-width="1.6"/><circle cx="8" cy="12" r="0.9" fill="#777"/></svg>
<div class="t" style="left:96px;top:1059px;color:#606060;font-size:11px">0</div>

<div class="a" style="left:1647px;top:1054px;width:119px;height:22px;border-radius:3px;border:1px solid #8f8f8f;background:linear-gradient(#e6e6e6,#cdcdcd)"></div>
<svg class="a" style="left:1654px;top:1059px" width="13" height="13" viewBox="0 0 13 13"><path d="M0.5 0.5h12v12H0.5zM4.5 0.5v12M8.5 0.5v12M0.5 4.5h12M0.5 8.5h12" fill="none" stroke="#3a5bb5" stroke-width="1"/></svg>
<div class="t" style="left:1672px;top:1059px;letter-spacing:-0.4px">Tile Layer 1</div>
<svg class="a" style="left:1752px;top:1063px" width="8" height="5" viewBox="0 0 8 5"><path d="M0 0h8L4 4.5z" fill="#444"/></svg>
<div class="a" style="left:1773px;top:1054px;width:72px;height:22px;border-radius:3px;border:1px solid #9a9a9a;background:#f3f3f3"></div>
<div class="a" style="left:1826px;top:1055px;width:18px;height:20px;background:linear-gradient(#dadada,#c6c6c6);border-left:1px solid #a8a8a8;border-radius:0 2px 2px 0"></div>
<svg class="a" style="left:1831px;top:1063px" width="8" height="5" viewBox="0 0 8 5"><path d="M0 0h8L4 4.5z" fill="#444"/></svg>
<div class="t" style="left:1777px;top:1058px">200 %</div>
<div class="t" style="left:1859px;top:1059px">News</div>

</body></html>
